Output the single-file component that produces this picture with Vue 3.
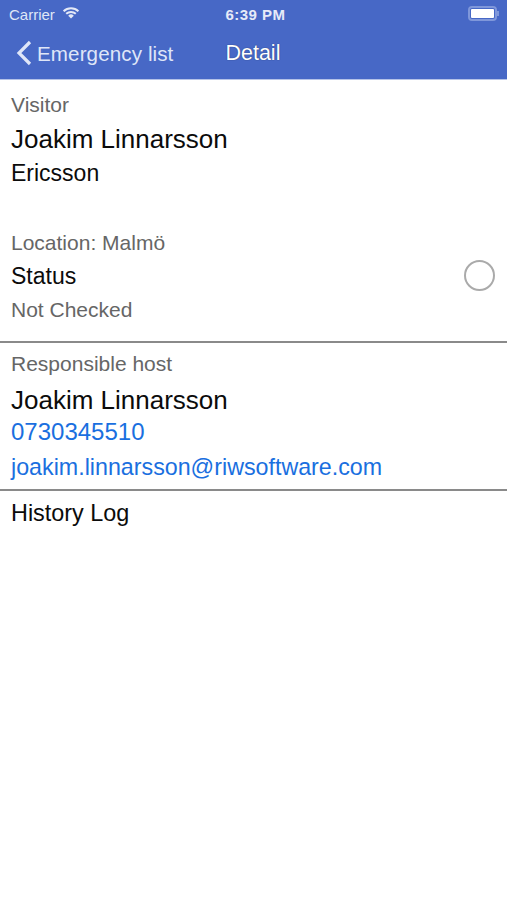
<script setup>
</script>

<template>
  <div class="screen">
    <header class="top">
      <div class="status">
        <div class="st-left">
          <span>Carrier</span>
          <svg class="wifi" width="18" height="13" viewBox="0 0 18 13">
            <path d="M9 12.6 6.2 9.7a4 4 0 0 1 5.6 0Z" fill="#e4e9f7"/>
            <path d="M1.6 5.2a10.6 10.6 0 0 1 14.8 0M4.2 7.8a7 7 0 0 1 9.6 0" fill="none" stroke="#e4e9f7" stroke-width="2"/>
          </svg>
        </div>
        <span class="time">6:39 PM</span>
        <div class="battery"><i class="bat-body"><b></b></i><i class="bat-tip"></i></div>
      </div>
      <div class="nav">
        <svg class="chev" width="18" height="26" viewBox="0 0 18 26">
          <path d="M15 2 4 13l11 11" fill="none" stroke="#dfe6f8" stroke-width="3.2"/>
        </svg>
        <span class="back">Emergency list</span>
        <span class="title">Detail</span>
      </div>
    </header>

    <section class="visitor">
      <div class="label">Visitor</div>
      <div class="name n1">Joakim Linnarsson</div>
      <div class="company">Ericsson</div>
      <div class="label loc">Location: Malmö</div>
      <div class="status-row">
        <div class="status-text">Status</div>
        <span class="radio"></span>
      </div>
      <div class="label nc">Not Checked</div>
    </section>

    <section class="host">
      <div class="label">Responsible host</div>
      <div class="name n2">Joakim Linnarsson</div>
      <div class="link phone">0730345510</div>
      <div class="link mail">joakim.linnarsson@riwsoftware.com</div>
    </section>

    <section class="history">History Log</section>
  </div>
</template>

<style scoped>
.screen {
  width: 507px;
  height: 900px;
  background: #fff;
  font-family: "Liberation Sans", Arial, sans-serif;
  color: #0b0b0b;
  overflow: hidden;
}
.top {
  height: 79px;
  background: #4768c6;
  border-bottom: 1px solid #b5c3e8;
  box-sizing: content-box;
}
.status {
  height: 28px;
  padding: 0 9px;
  display: grid;
  grid-template-columns: 1fr auto 1fr;
  align-items: center;
  color: #dfe6f6;
  font-size: 15px;
}
.st-left { display: flex; align-items: center; gap: 7px; }
.wifi { margin-top: -3px; }
.time { font-weight: 700; font-size: 15px; letter-spacing: 0.45px; color: #e6ebf8; margin-left: 4px; }
.battery { justify-self: end; display: flex; align-items: center; margin-right: -1px; margin-top: -1px; }
.bat-body {
  display: block;
  width: 29px;
  height: 15px;
  box-sizing: border-box;
  border: 2px solid #7f97da;
  border-radius: 4px;
  padding: 1px;
}
.bat-body b { display: block; height: 100%; background: #fff; border-radius: 1px; }
.bat-tip { display: block; width: 2px; height: 5px; background: #7f97da; }
.nav {
  height: 51px;
  padding-left: 15px;
  display: flex;
  align-items: center;
  font-size: 20.6px;
}
.chev { margin-top: -2px; }
.back { color: #dfe6f8; margin-left: 4px; letter-spacing: 0.1px; }
.title { color: #fff; font-weight: 500; font-size: 21.5px; margin-left: 52px; text-shadow: 0 0 1px #1c2a55; }
.visitor {
  height: 263px;
  padding: 13px 11px 0;
  box-sizing: border-box;
  border-bottom: 2px solid #8a8a8a;
}
.label { color: #666; font-size: 21px; line-height: 23px; }
.name { font-size: 26px; line-height: 29px; }
.n1 { margin-top: 9px; }
.company { font-size: 23px; line-height: 26px; margin-top: 6px; }
.loc { margin-top: 45px; }
.status-row { display: flex; justify-content: space-between; align-items: center; margin-top: 6px; }
.status-text { font-size: 23px; line-height: 26px; }
.radio {
  width: 31px;
  height: 31px;
  box-sizing: border-box;
  border: 2px solid #aaa;
  border-radius: 50%;
  margin-right: 1px;
}
.nc { margin-top: 7px; }
.host {
  height: 148px;
  padding: 9px 11px 0;
  box-sizing: border-box;
  border-bottom: 2px solid #8a8a8a;
}
.n2 { margin-top: 11px; }
.link { color: #1a6fe0; font-size: 24px; line-height: 27px; }
.phone { margin-top: 3px; }
.mail { margin-top: 9px; font-size: 23.25px; }
.history { padding: 9px 11px 0; font-size: 23.4px; line-height: 26px; }
</style>
